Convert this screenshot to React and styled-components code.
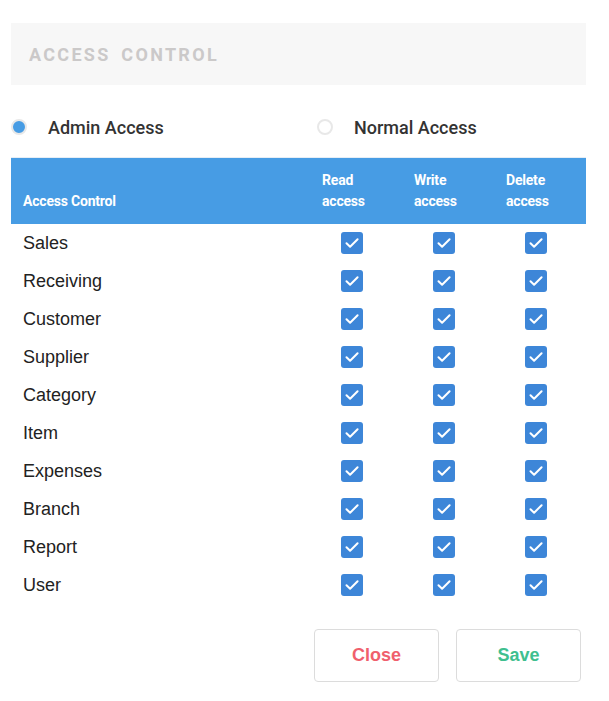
import React, { useState } from "react"
import styled, { createGlobalStyle } from "styled-components"

const GlobalStyle = createGlobalStyle`
  body {
    margin: 0;
    background: #fff;
    font-family: Roboto, "Liberation Sans", sans-serif;
  }
`

const Page = styled.div`
  width: 575px;
  padding: 23px 0 0 11px;
`

const TitleBar = styled.div`
  height: 62px;
  background: #f7f7f7;
  display: flex;
  align-items: center;
  padding-left: 18px;
`

const Title = styled.h2`
  margin: 0;
  font-size: 18px;
  font-weight: 700;
  letter-spacing: 2.3px;
  word-spacing: 4px;
  color: #cbc9c9;
`

const RadioRow = styled.div`
  display: grid;
  grid-template-columns: 306px 1fr;
  box-sizing: border-box;
  height: 72px;
  padding-top: 12px;
  align-items: center;
`

const RadioOption = styled.label`
  display: flex;
  align-items: center;
  gap: 21px;
  font-size: 18px;
  font-weight: 500;
  color: #333;
  cursor: pointer;
`

const RadioDot = styled.span`
  width: 16px;
  height: 16px;
  box-sizing: border-box;
  border-radius: 50%;
  border: 2px solid #e8e8e8;
  background: ${p => (p.checked ? "#479ce4" : "#fff")};
`

const Table = styled.div`
  border-top: 1px solid #e6eef6;
`

const Row = styled.div`
  display: grid;
  grid-template-columns: 299px 92px 92px 92px;
  align-items: center;
  height: ${p => (p.head ? "66px" : "38px")};
  background: ${p => (p.head ? "#479ce4" : "transparent")};
`

const HeadCell = styled.div`
  align-self: end;
  padding: 0 0 12px 12px;
  color: #fff;
  font-size: 14px;
  font-weight: 700;
  line-height: 21px;
  letter-spacing: -0.2px;
`

const Label = styled.div`
  padding-left: 12px;
  font-family: "Liberation Sans", Arial, sans-serif;
  font-size: 18px;
  color: #222;
`

const BoxCell = styled.div`
  padding-left: 31px;
  display: flex;
`

const Box = styled.button`
  width: 22px;
  height: 22px;
  padding: 0;
  border: none;
  border-radius: 3px;
  background: ${p => (p.checked ? "#3d86d8" : "#fff")};
  box-shadow: ${p => (p.checked ? "none" : "inset 0 0 0 2px #ccc")};
  display: flex;
  align-items: center;
  justify-content: center;
  cursor: pointer;
`

const Actions = styled.div`
  display: flex;
  justify-content: flex-end;
  gap: 17px;
  margin: 25px 5px 0 0;
`

const ActionButton = styled.button`
  width: 125px;
  height: 53px;
  background: #fff;
  border: 1px solid #dcdcdc;
  border-radius: 4px;
  font-family: "Liberation Sans", Arial, sans-serif;
  font-size: 18px;
  font-weight: 700;
  color: ${p => p.color};
  cursor: pointer;
`

const Check = () => (
  <svg width="16" height="16" viewBox="0 0 16 16" fill="none">
    <path d="M2.5 8.3l3.6 3.5L13.6 4.2" stroke="#fff" strokeWidth="2" strokeLinecap="round" strokeLinejoin="round" />
  </svg>
)

const modules = ["Sales", "Receiving", "Customer", "Supplier", "Category", "Item", "Expenses", "Branch", "Report", "User"]

const App = () => {
  const [mode, setMode] = useState("admin")
  const [perms, setPerms] = useState(() =>
    Object.fromEntries(modules.map(m => [m, [true, true, true]]))
  )

  const toggle = (m, i) => {
    setPerms(prev => ({ ...prev, [m]: prev[m].map((v, j) => (j === i ? !v : v)) }))
  }

  return (
    <Page>
      <GlobalStyle />
      <TitleBar>
        <Title>ACCESS CONTROL</Title>
      </TitleBar>

      <RadioRow>
        <RadioOption onClick={() => setMode("admin")}>
          <RadioDot checked={mode === "admin"} />
          Admin Access
        </RadioOption>
        <RadioOption onClick={() => setMode("normal")}>
          <RadioDot checked={mode === "normal"} />
          Normal Access
        </RadioOption>
      </RadioRow>

      <Table>
        <Row head>
          <HeadCell>Access Control</HeadCell>
          <HeadCell>Read<br />access</HeadCell>
          <HeadCell>Write<br />access</HeadCell>
          <HeadCell>Delete<br />access</HeadCell>
        </Row>
        {modules.map(m => (
          <Row key={m}>
            <Label>{m}</Label>
            {perms[m].map((v, i) => (
              <BoxCell key={i}>
                <Box checked={v} onClick={() => toggle(m, i)}>
                  {v && <Check />}
                </Box>
              </BoxCell>
            ))}
          </Row>
        ))}
      </Table>

      <Actions>
        <ActionButton color="#f0606d">Close</ActionButton>
        <ActionButton color="#3fbf8f">Save</ActionButton>
      </Actions>
    </Page>
  )
}

export default App
